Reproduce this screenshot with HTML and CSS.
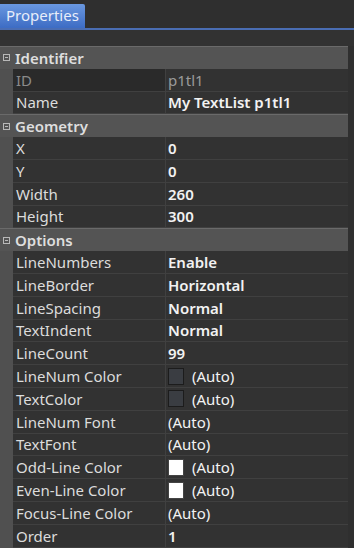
FILE: index.html
```html
<!DOCTYPE html>
<html>
<head>
<meta charset="utf-8">
<link rel="stylesheet" href="styles.css">
</head>
<body>
<div class="panel">
  <div class="tabbar"><div class="tab">Properties</div></div>
  <div class="gap"></div>
  <div class="grid">
    <div class="cat"><span class="toggle"></span>Identifier</div>
    <div class="group">
      <div class="row disabled"><div class="k">ID</div><div class="v">p1tl1</div></div>
      <div class="row"><div class="k">Name</div><div class="v">My TextList p1tl1</div></div>
    </div>
    <div class="cat"><span class="toggle"></span>Geometry</div>
    <div class="group">
      <div class="row"><div class="k">X</div><div class="v">0</div></div>
      <div class="row"><div class="k">Y</div><div class="v">0</div></div>
      <div class="row"><div class="k">Width</div><div class="v">260</div></div>
      <div class="row"><div class="k">Height</div><div class="v">300</div></div>
    </div>
    <div class="cat"><span class="toggle"></span>Options</div>
    <div class="group">
      <div class="row"><div class="k">LineNumbers</div><div class="v">Enable</div></div>
      <div class="row"><div class="k">LineBorder</div><div class="v">Horizontal</div></div>
      <div class="row"><div class="k">LineSpacing</div><div class="v">Normal</div></div>
      <div class="row"><div class="k">TextIndent</div><div class="v">Normal</div></div>
      <div class="row"><div class="k">LineCount</div><div class="v">99</div></div>
      <div class="row"><div class="k">LineNum Color</div><div class="v auto"><span class="sw dark"></span>(Auto)</div></div>
      <div class="row"><div class="k">TextColor</div><div class="v auto"><span class="sw dark"></span>(Auto)</div></div>
      <div class="row"><div class="k">LineNum Font</div><div class="v auto">(Auto)</div></div>
      <div class="row"><div class="k">TextFont</div><div class="v auto">(Auto)</div></div>
      <div class="row"><div class="k">Odd-Line Color</div><div class="v auto"><span class="sw white"></span>(Auto)</div></div>
      <div class="row"><div class="k">Even-Line Color</div><div class="v auto"><span class="sw white"></span>(Auto)</div></div>
      <div class="row"><div class="k">Focus-Line Color</div><div class="v auto">(Auto)</div></div>
      <div class="row"><div class="k">Order</div><div class="v">1</div></div>
    </div>
  </div>
</div>
</body>
</html>
```
FILE: styles.css
```css
html, body {
  margin: 0;
  padding: 0;
  background: #2f2f2f;
}
body {
  font-family: "Noto Sans", "Open Sans", sans-serif;
  font-size: 15px;
  color: #e0e0e0;
  width: 354px;
  height: 548px;
  overflow: hidden;
}
.tabbar {
  height: 28px;
  border-bottom: 2px solid #4a6db3;
  display: flex;
  align-items: flex-end;
}
.tab {
  width: 85px;
  height: 24px;
  box-sizing: border-box;
  padding-left: 6px;
  line-height: 23px;
  color: #e8eefa;
  background: linear-gradient(#6a98e0, #3d6cc4);
  border-top-right-radius: 2px;
}
.gap {
  height: 16px;
  background: #323232;
}
.grid {
  width: 348px;
}
.cat {
  height: 22.8px;
  box-sizing: border-box;
  background: #545454;
  border-top: 1px solid #6a6a6a;
  display: flex;
  align-items: center;
  font-weight: 600;
  color: #dedede;
  padding-left: 3px;
}
.toggle {
  width: 5px;
  height: 5px;
  border: 1px solid #b8b8b8;
  margin-right: 5px;
  position: relative;
}
.toggle::after {
  content: "";
  position: absolute;
  left: 1px;
  right: 1px;
  top: 2px;
  height: 1px;
  background: #b8b8b8;
}
.group {
  background: #505050;
  padding-left: 13px;
}
.row {
  height: 22.8px;
  box-sizing: border-box;
  display: grid;
  grid-template-columns: 152px 1fr;
  column-gap: 1px;
  background: #404040;
  padding-bottom: 1px;
}
.k, .v {
  background: #323232;
  display: flex;
  align-items: center;
  white-space: nowrap;
}
.k {
  padding-left: 3px;
  color: #dcdcdc;
}
.v {
  padding-left: 2px;
  font-weight: 600;
  color: #f2f2f2;
}
.v.auto {
  font-weight: 400;
}
.disabled .k {
  background: #2a2a2a;
  color: #8a8a8a;
}
.disabled .v {
  color: #9a9a9a;
  font-weight: 400;
}
.sw {
  width: 14px;
  height: 15px;
  border: 1px solid #1c1c1c;
  margin-right: 8px;
}
.sw.dark { background: #3a3d42; }
.sw.white { background: #ffffff; border-color: #444; }
```
